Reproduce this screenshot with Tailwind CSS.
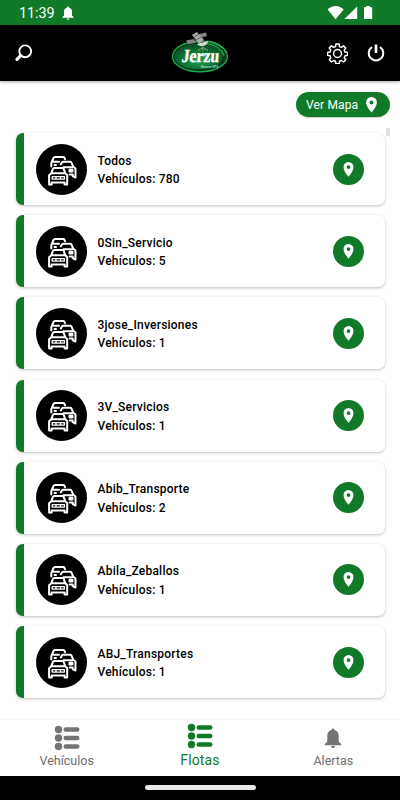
<!DOCTYPE html>
<html lang="es">
<head>
  <meta charset="UTF-8"/>
  <meta name="viewport" content="width=device-width,initial-scale=1"/>
  <title>Flotas</title>
  <script src="https://cdn.jsdelivr.net/npm/@tailwindcss/browser@4"></script>
</head>
<body class="flex flex-col h-screen overflow-hidden bg-white font-[Roboto,sans-serif] text-black">

  <!-- Status bar -->
  <div class="flex items-center h-[25px] shrink-0 bg-[#117a28] text-white pl-[19px] pr-[27.500px]">
    <span class="text-[14.3px] leading-none w-[43px] pt-[2px]">11:39</span>
    <svg class="w-3 h-3.5" viewBox="0 0 12 14" fill="currentColor"><path d="M6 .5a1.2 1.2 0 0 1 1.2 1.2C9.200 2.200 10 3.800 10 5.500V9.500L11.500 11v.8H.5V11L2 9.500v-4c0-1.700.8-3.300 2.800-3.800A1.200 1.200 0 0 1 6 .5zM4.700 12.500h2.600a1.300 1.300 0 0 1-2.600 0z"/></svg>
    <svg class="ml-auto w-[46px] h-4" viewBox="0 0 46 16" fill="currentColor">
      <path d="M0.600 4.600C5-.2 12.400-.2 16.600 4.600L8.600 14.300z"/>
      <path d="M30.200 1.400V14H17.400z"/>
      <path d="M39.200 1h3.600v1.300h2.400V14H37V2.300h2.200z"/>
    </svg>
  </div>

  <!-- Header -->
  <header class="flex items-center justify-between h-14 shrink-0 bg-black text-white px-[15px] shadow-[0_1px_3px_rgba(0,0,0,0.35)] z-10">
    <svg class="w-[18px] h-[18px] mr-[39px]" viewBox="0 0 18 18" fill="none" stroke="currentColor">
      <circle cx="10.200" cy="7.300" r="5.900" stroke-width="1.900"/>
      <path d="M5.700 11.700L2 15.300" stroke-width="3.200" stroke-linecap="round"/>
    </svg>

    <svg class="w-[60px] h-[44px] -mt-0.5" viewBox="0 0 60 44">
      <defs>
        <radialGradient id="glow" cx=".5" cy=".65" r=".55">
          <stop offset="0" stop-color="#1fa04a"/>
          <stop offset="1" stop-color="#07592a"/>
        </radialGradient>
      </defs>
      <ellipse cx="30" cy="26.500" rx="27.500" ry="15.300" fill="#053d1a" stroke="#1cab50" stroke-width="1.300"/>
      <ellipse cx="28.500" cy="26.500" rx="24" ry="12.800" fill="url(#glow)"/>
      <path d="M36 13.500c10 1.500 16 6 18 12M37 11c11 1 17 6 19.500 12" fill="none" stroke="#25b55a" stroke-width="1.100"/>
      <path d="M28 20.500l5-3 5 3M33 17.500v3.500" fill="none" stroke="#a9b58e" stroke-width=".8"/>
      <path d="M16 10.500l8-1.500 2 3.500-8 1.800zM29 4l7-1.500 1 3.500-7 2z" fill="#858585"/>
      <path d="M22 5l5-3 7 8-5 4z" fill="#aaa"/>
      <path d="M27 14l11-3c0 5-8 7-11 3z" fill="#d8d8d8"/>
      <path d="M24 7l5-3M26 10l5-3" stroke="#444" stroke-width=".8"/>
      <text x="11" y="32" font-family="Liberation Serif, serif" font-weight="700" font-size="18.500" textLength="37.500" lengthAdjust="spacingAndGlyphs" fill="#fff" stroke="#fff" stroke-width=".4" transform="translate(3.500 0) skewX(-6)">Jerzu</text>
      <text x="31" y="37.800" font-family="Liberation Sans, sans-serif" font-weight="700" font-size="2.800" fill="#b9dfc5">Rastreo GPS</text>
    </svg>

    <div class="flex items-center gap-[19px]">
      <svg class="w-[21px] h-[21px]" viewBox="0 0 24 24" fill="none" stroke="currentColor" stroke-width="1.700" stroke-linejoin="round">
        <circle cx="12" cy="12" r="4.500"/>
        <path d="M10.200 1.200h3.600l.5 2.900 2.200.9 2.400-1.700 2.500 2.500-1.700 2.400.9 2.200 2.900.5v3.200l-2.900.5-.9 2.200 1.700 2.400-2.500 2.500-2.400-1.700-2.200.9-.5 2.900h-3.600l-.5-2.900-2.200-.9-2.400 1.700-2.500-2.500 1.700-2.400-.9-2.200-2.900-.5v-3.200l2.900-.5.9-2.200-1.700-2.400 2.500-2.500L7.500 5l2.200-.9z"/>
      </svg>
      <svg class="w-[18px] h-[18px]" viewBox="0 0 18 18" fill="none" stroke="currentColor">
        <path d="M5 3A7.300 7.300 0 1 0 13 3" stroke-width="2"/>
        <path d="M9 0.500v8.500" stroke-width="2.600"/>
      </svg>
    </div>
  </header>

  <main class="relative flex-1 min-h-0 overflow-hidden">
    <div class="flex justify-end pt-[11px] pr-[10.500px]">
      <button class="flex items-center h-[25px] w-[94px] pl-[10.500px] rounded-full bg-[#117a28] text-white text-[12px] tracking-[0.15px] shadow-[0_1px_1px_rgba(0,0,0,0.2)]">
        <span class="w-[60px] pt-px text-left whitespace-nowrap">Ver Mapa</span>
        <svg class="w-[11px] h-4" viewBox="0 0 11 16"><use href="#pin"/></svg>
      </button>
    </div>

    <!-- Scrollbar thumb -->
    <div class="absolute right-[10px] top-[47px] w-1 h-2 bg-[#e2e2e2]"></div>

    <!-- Fleet list -->
    <div id="fleetList" class="flex flex-col gap-[10.2px] mt-4 pl-[15.500px] pr-[15.500px]"></div>
  </main>

  <!-- Bottom tabs -->
  <nav class="grid grid-cols-3 h-[58px] shrink-0 bg-white border-t-2 border-[#f7f7f7] text-[#6d6d6d]">
    <a class="flex flex-col items-center pt-[5px] text-[12.500px] leading-[15px]">
      <svg class="w-[26px] h-[26px] mb-[2px]" viewBox="0 0 26 26" fill="#747474"><use href="#list"/></svg>
      Vehículos
    </a>
    <a class="flex flex-col items-center pt-[3px] text-[14px] leading-[17px] tracking-[0.15px] text-[#117a28]">
      <svg class="w-[26px] h-[26px] mb-[3px]" viewBox="0 0 26 26" fill="#117a28"><use href="#list"/></svg>
      Flotas
    </a>
    <a class="flex flex-col items-center pt-[5px] text-[12.500px] leading-[15px]">
      <svg class="w-[18px] h-[26px] mb-[2px]" viewBox="0 0 18 26" fill="#747474"><path d="M9 3.400a1.300 1.300 0 0 1 1.300 1.300C13.300 5.500 14.700 8 14.700 10.500V16.500L17.300 19.200v1H.7v-1L3.300 16.500v-6c0-2.500 1.400-5 4.400-5.800A1.300 1.300 0 0 1 9 3.400zM7 21.100h4a2 2 0 0 1-4 0z"/></svg>
      Alertas
    </a>
  </nav>

  <!-- System gesture bar -->
  <div class="flex justify-center h-6 shrink-0 bg-black pt-[9px]">
    <div class="w-[111px] h-[5px] rounded-full bg-[#e8e8e8]"></div>
  </div>

  <!-- Icons -->
  <svg class="hidden">
    <symbol id="pin" viewBox="0 0 11 16">
      <path fill="#fff" fill-rule="evenodd" d="M5.500 0A5.400 5.400 0 0 0 .1 5.500C.1 9.500 5.500 15.600 5.500 15.600S10.900 9.500 10.900 5.500A5.400 5.400 0 0 0 5.500 0zm0 3.400a2 2 0 1 1 0 4 2 2 0 0 1 0-4z"/>
    </symbol>
    <symbol id="list" viewBox="0 0 26 26">
      <circle cx="4.500" cy="4.500" r="3.700"/><circle cx="4.500" cy="13" r="3.700"/><circle cx="4.500" cy="21.500" r="3.700"/>
      <rect x="9.500" y="2.300" width="16" height="4.400" rx="2.200"/><rect x="9.500" y="10.800" width="16" height="4.400" rx="2.200"/><rect x="9.500" y="19.300" width="16" height="4.400" rx="2.200"/>
    </symbol>
    <symbol id="cars" viewBox="0 0 51 51">
      <g fill="none" stroke="#fff" stroke-width="2" stroke-linejoin="round" stroke-linecap="round">
        <path d="M15.300 22.500v-3.300l2.200-5.200q.4-1 1.500-1h8q1 0 1.400.8l.7 1.400M17.500 17.800h5.500M18.500 21h1.500"/>
        <path d="M24.800 20.500l1.100-1.900q.4-.8 1.300-.8h7q.9 0 1.300.8l1.800 4.200 2.200 1.700v9l-2.800-1.400v-1.600h-3M27.500 23.200h9M33.500 25.800h3v1.800h-3z"/>
        <path d="M15.300 29.300l1.600-4.400q.4-1 1.400-1h8q1 0 1.400 1l1.600 4.400M15.300 29.300h14l1.900 1.900v9.300h-2.600v-2H15.700v2h-2.600v-9.300z"/>
        <path d="M16.200 32.600h12.200v2.500H16.200zM20 32.600v2.500M24.600 32.600v2.500" stroke-width="1.400"/>
      </g>
    </symbol>
  </svg>

  <script>
    const fleets = [
      ['Todos', 780],
      ['0Sin_Servicio', 5],
      ['3jose_Inversiones', 1],
      ['3V_Servicios', 1],
      ['Abib_Transporte', 2],
      ['Abila_Zeballos', 1],
      ['ABJ_Transportes', 1],
    ];
    document.getElementById('fleetList').innerHTML = fleets.map(([name, count]) => `
      <div class="flex items-center h-[72px] shrink-0 rounded-[7px] border-l-8 border-[#117a28] bg-white pl-3 pr-[20.500px] shadow-[0_1px_3px_rgba(0,0,0,0.25)]">
        <div class="w-[51px] h-[51px] rounded-full bg-black shrink-0">
          <svg class="w-[51px] h-[51px]" viewBox="0 0 51 51"><use href="#cars"/></svg>
        </div>
        <div class="ml-[11px] flex-1 pt-[2px] text-[12px] leading-[18.500px] font-medium tracking-[0.22px]">
          <p>${name}</p>
          <p>Vehículos: ${count}</p>
        </div>
        <button class="flex items-center justify-center w-[31px] h-[31px] rounded-full bg-[#117a28]">
          <svg class="w-[11px] h-[15px]" viewBox="0 0 11 16"><use href="#pin"/></svg>
        </button>
      </div>`).join('');
  </script>
</body>
</html>
